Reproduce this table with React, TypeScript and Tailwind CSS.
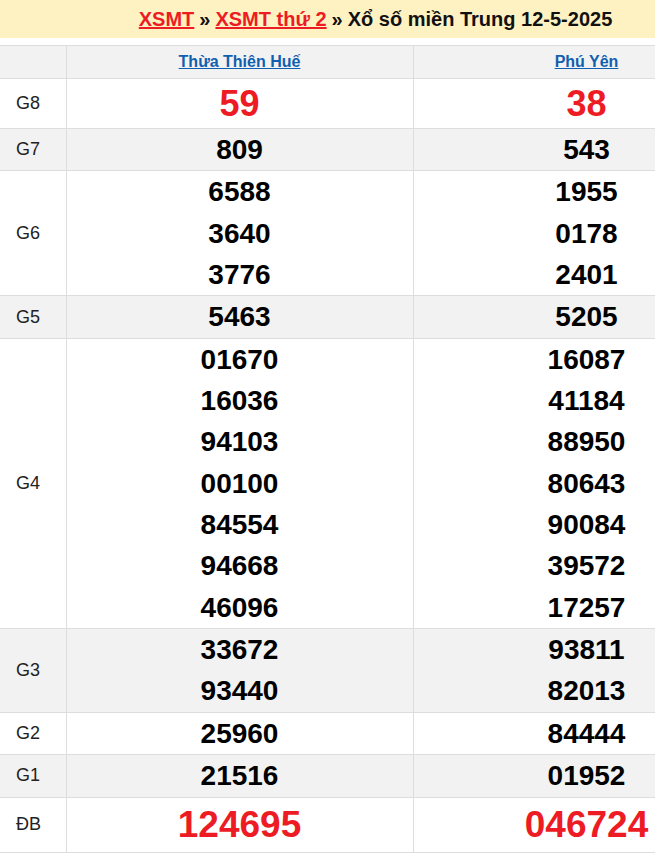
import React from "react";

type Row = { label: string; a: string[]; b: string[]; big?: "g8" | "db"; shade?: boolean };

const rows: Row[] = [
  { label: "G8", a: ["59"], b: ["38"], big: "g8" },
  { label: "G7", a: ["809"], b: ["543"], shade: true },
  { label: "G6", a: ["6588", "3640", "3776"], b: ["1955", "0178", "2401"] },
  { label: "G5", a: ["5463"], b: ["5205"], shade: true },
  {
    label: "G4",
    a: ["01670", "16036", "94103", "00100", "84554", "94668", "46096"],
    b: ["16087", "41184", "88950", "80643", "90084", "39572", "17257"],
  },
  { label: "G3", a: ["33672", "93440"], b: ["93811", "82013"], shade: true },
  { label: "G2", a: ["25960"], b: ["84444"] },
  { label: "G1", a: ["21516"], b: ["01952"], shade: true },
  { label: "ĐB", a: ["124695"], b: ["046724"], big: "db" },
];

const Cell = ({ nums, big }: { nums: string[]; big?: "g8" | "db" }) => (
  <td className="border border-[#dddddd] p-0 text-center align-middle">
    {nums.map((n, i) => (
      <div
        key={i}
        className={
          big === "g8"
            ? "text-[36px] font-bold leading-[49px] text-[#ed1c24]"
            : big === "db"
            ? "text-[37px] font-bold leading-[54px] text-[#ed1c24]"
            : "text-[28px] font-bold leading-[41.35px] text-black"
        }
      >
        {n}
      </div>
    ))}
  </td>
);

export default function App() {
  return (
    <div className="w-[655px] overflow-hidden bg-white font-['Liberation_Sans',Arial,sans-serif]">
      <div className="w-[760px]">
        <div className="flex h-[38px] w-[751px] items-center justify-center bg-[#fff2c2] text-[20px] font-bold text-[#111]">
          <a href="#" className="text-[#ed1c24] underline">XSMT</a>
          <span className="mx-[5px]">»</span>
          <a href="#" className="text-[#ed1c24] underline">XSMT thứ 2</a>
          <span className="mx-[5px]">»</span>
          <span>Xổ số miền Trung 12-5-2025</span>
        </div>
        <table className="mt-[7px] w-[760px] table-fixed border-collapse">
          <colgroup>
            <col className="w-[66px]" />
            <col className="w-[347px]" />
            <col className="w-[347px]" />
          </colgroup>
          <thead>
            <tr className="h-[33px] bg-[#f2f2f2]">
              <th className="border border-l-0 border-[#dddddd]"></th>
              <th className="border border-[#dddddd] text-center text-[16px] font-bold">
                <a href="#" className="text-[#1060b0] underline">Thừa Thiên Huế</a>
              </th>
              <th className="border border-[#dddddd] text-center text-[16px] font-bold">
                <a href="#" className="text-[#1060b0] underline">Phú Yên</a>
              </th>
            </tr>
          </thead>
          <tbody>
            {rows.map((r) => (
              <tr key={r.label} className={r.shade ? "bg-[#f2f2f2]" : "bg-white"}>
                <td className="border border-l-0 border-[#dddddd] py-0 pl-[16px] text-left text-[18px] text-[#222]">
                  {r.label}
                </td>
                <Cell nums={r.a} big={r.big} />
                <Cell nums={r.b} big={r.big} />
              </tr>
            ))}
          </tbody>
        </table>
      </div>
    </div>
  );
}
